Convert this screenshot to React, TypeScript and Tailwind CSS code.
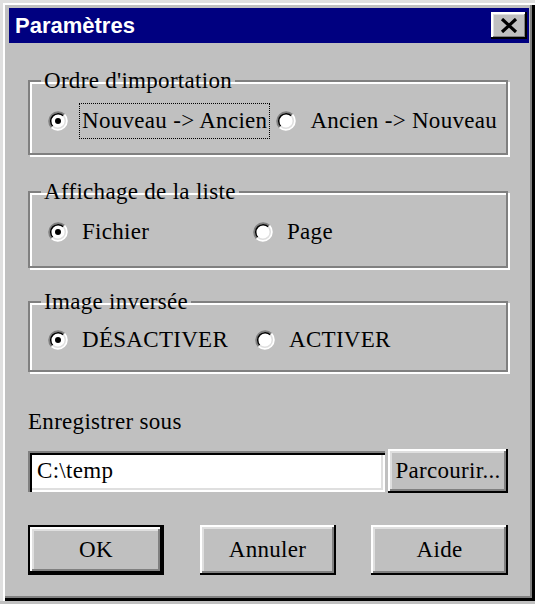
import React from "react";

const serif = "font-['Liberation_Serif','Times_New_Roman',serif]";

const Radio = ({ checked }: { checked?: boolean }) => {
  return (
    <svg width="20" height="20" viewBox="0 0 20 20" className="shrink-0">
      <circle cx="10" cy="10" r="9" fill="#fff" />
      <path d="M3.64 16.36 A9 9 0 0 1 16.36 3.64" stroke="#808080" strokeWidth="2" fill="none" />
      <path d="M16.36 3.64 A9 9 0 0 1 3.64 16.36" stroke="#fff" strokeWidth="2" fill="none" />
      <path d="M4.7 15.3 A7.5 7.5 0 0 1 15.3 4.7" stroke="#000" strokeWidth="1.5" fill="none" />
      <path d="M15.3 4.7 A7.5 7.5 0 0 1 4.7 15.3" stroke="#dfdfdf" strokeWidth="1.5" fill="none" />
      {checked && <circle cx="10" cy="10" r="3" fill="#000" />}
    </svg>
  );
};

const Option = ({
  label,
  checked,
  focused,
  className,
}: {
  label: string;
  checked?: boolean;
  focused?: boolean;
  className?: string;
}) => {
  return (
    <div className={`flex items-center shrink-0 ${className ?? ""}`}>
      <Radio checked={checked} />
      <span
        className={`ml-[11px] px-[2px] h-[36px] flex items-center whitespace-nowrap ${
          focused ? "border border-dotted border-black" : "border border-transparent"
        }`}
      >
        {label}
      </span>
    </div>
  );
};

const Group = ({ title, children, className }: { title: string; children: React.ReactNode; className?: string }) => {
  return (
    <fieldset
      className={`border-2 border-[#808080] shadow-[2px_2px_0_#fff,inset_2px_2px_0_#fff] p-0 ${className ?? ""}`}
    >
      <legend className="ml-[11px] px-[3px] leading-[24px] whitespace-nowrap">{title}</legend>
      <div className="pl-[18px]">{children}</div>
    </fieldset>
  );
};

const Button = ({ children, isDefault, className }: { children: React.ReactNode; isDefault?: boolean; className?: string }) => {
  return (
    <button
      className={`bg-[#c0c0c0] flex items-center justify-center whitespace-nowrap ${
        isDefault
          ? "border-2 border-black shadow-[inset_-2px_-2px_0_#000,inset_2px_2px_0_#fff,inset_-4px_-4px_0_#808080,inset_4px_4px_0_#dfdfdf]"
          : "shadow-[inset_-2px_-2px_0_#000,inset_2px_2px_0_#fff,inset_-4px_-4px_0_#808080,inset_4px_4px_0_#dfdfdf]"
      } ${className ?? ""}`}
    >
      {children}
    </button>
  );
};

export default function App() {
  return (
    <div className="w-[535px] h-[604px] bg-[#c0c0c0]">
      <div className="w-[535px] h-[601px] bg-[#c0c0c0] pt-[8px] pl-[9px] pr-[6px] shadow-[inset_3px_3px_0_#dfdfdf,inset_5px_5px_0_#fff,inset_-3px_-3px_0_#000,inset_-5px_-5px_0_#808080]">
        {/* title bar */}
        <div className="h-[35px] bg-[#000080] flex items-center justify-between pl-[6px] pr-[2px]">
          <span className="text-white font-bold text-[22px] font-['Liberation_Sans',Arial,sans-serif]">
            Paramètres
          </span>
          <button className="w-[36px] h-[27px] bg-[#c0c0c0] flex items-center justify-center shadow-[inset_-2px_-2px_0_#000,inset_2px_2px_0_#fff,inset_-3px_-3px_0_#808080,inset_3px_3px_0_#dfdfdf]">
            <svg width="18" height="15" viewBox="0 0 18 15">
              <path d="M2 1 L16 14 M16 1 L2 14" stroke="#000" strokeWidth="3.2" />
            </svg>
          </button>
        </div>

        <div className={`pl-[19px] w-[499px] flex flex-col text-[23px] tracking-[0.3px] text-black ${serif}`}>
          <Group title="Ordre d'importation" className="mt-[26px] pb-[14px]">
            <div className="flex items-center mt-[10px]">
              <Option label="Nouveau -> Ancien" checked focused />
              <Option label="Ancien -> Nouveau" className="ml-[6px]" />
            </div>
          </Group>

          <Group title="Affichage de la liste" className="mt-[25px] pb-[16px]">
            <div className="flex items-center mt-[10px]">
              <Option label="Fichier" checked className="w-[205px]" />
              <Option label="Page" />
            </div>
          </Group>

          <Group title="Image inversée" className="mt-[22px] pb-[12px]">
            <div className="flex items-center mt-[8px]">
              <Option label="DÉSACTIVER" checked className="w-[207px]" />
              <Option label="ACTIVER" />
            </div>
          </Group>

          <div className="mt-[37px] leading-[26px]">Enregistrer sous</div>

          <div className="mt-[14px] flex items-center gap-[3px]">
            <div className="w-[357px] h-[41px] bg-white flex items-center pl-[9px] shadow-[inset_2px_2px_0_#808080,inset_4px_4px_0_#000,inset_-2px_-2px_0_#fff,inset_-4px_-4px_0_#dfdfdf]">
              C:\temp
            </div>
            <Button className="w-[120px] h-[44px]">Parcourir...</Button>
          </div>

          <div className="mt-[32px] flex justify-between">
            <Button isDefault className="w-[136px] h-[50px]">
              OK
            </Button>
            <Button className="w-[136px] h-[50px]">Annuler</Button>
            <Button className="w-[137px] h-[50px]">Aide</Button>
          </div>
        </div>
      </div>
    </div>
  );
}
